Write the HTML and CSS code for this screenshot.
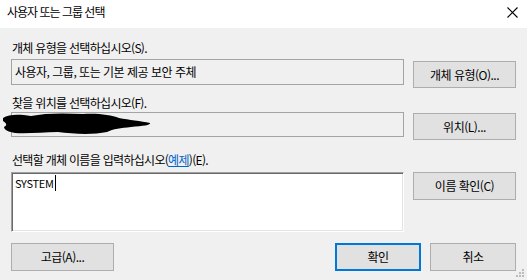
FILE: index.html
```html
<!DOCTYPE html>
<html lang="ko">
<head>
<meta charset="utf-8">
<link rel="stylesheet" href="styles.css">
</head>
<body>
<div class="dialog">
  <div class="titlebar">
    <span class="title">사용자 또는 그룹 선택</span>
    <svg class="close" width="11" height="11" viewBox="0 0 11 11"><path d="M0.5 0.5L10.5 10.5M10.5 0.5L0.5 10.5" stroke="#000" stroke-width="1.1" fill="none"/></svg>
  </div>
  <div class="content">
    <div class="label l1">개체 유형을 선택하십시오(S).</div>
    <div class="row r1">
      <div class="field readonly">사용자, 그룹, 또는 기본 제공 보안 주체</div>
      <div class="btn b1">개체 유형(O)...</div>
    </div>
    <div class="label l2">찾을 위치를 선택하십시오(F).</div>
    <div class="row r2">
      <div class="field readonly loc">
        <svg class="blot" width="150" height="22" viewBox="0 0 150 22"><path d="M0 5 C6 1 16 1 28 3 C42 0 60 0 80 1 C95 0 108 2 116 5 C126 7 138 8 147 10 C148 12 140 13 128 14 C118 15 110 16 104 19 C90 22 70 21 55 19 C40 19 25 21 12 20 C6 19 1 17 1 14 C5 12 3 10 0 8 Z" fill="#000"/></svg>
      </div>
      <div class="btn b2">위치(L)...</div>
    </div>
    <div class="label l3">선택할 개체 이름을 입력하십시오(<span class="link">예제</span>)(E).</div>
    <div class="row r3">
      <div class="edit"><span class="caret">SYSTEM</span></div>
      <div class="btn b3">이름 확인(C)</div>
    </div>
    <div class="bottom">
      <div class="btn adv">고급(A)...</div>
      <div class="right">
        <div class="btn ok">확인</div>
        <div class="btn cancel">취소</div>
      </div>
    </div>
  </div>
  <svg class="grip" width="9" height="9" viewBox="0 0 9 9" fill="#bcbcbc"><rect x="6" y="0" width="2" height="2"/><rect x="3" y="3" width="2" height="2"/><rect x="6" y="3" width="2" height="2"/><rect x="0" y="6" width="2" height="2"/><rect x="3" y="6" width="2" height="2"/><rect x="6" y="6" width="2" height="2"/></svg>
</div>
</body>
</html>
```

FILE: styles.css
```css
html, body {
  margin: 0;
  padding: 0;
}
body {
  width: 527px;
  height: 280px;
  overflow: hidden;
  background: #f0f0f0;
  font-family: "Noto Sans CJK KR", "Noto Sans", sans-serif;
  font-size: 12px;
  letter-spacing: -0.5px;
  color: #000;
}
.dialog {
  position: relative;
  width: 527px;
  height: 280px;
  background: #f0f0f0;
}
.titlebar {
  height: 28px;
  background: #fff;
  display: flex;
  align-items: center;
  justify-content: space-between;
  padding: 0 9px 0 7px;
}
.title {
  line-height: 20px;
  margin-top: -4px;
  letter-spacing: -1px;
}
.close {
  margin-top: -4px;
}
.content {
  padding: 0 11px;
}
.label {
  line-height: 18px;
  padding-left: 1px;
  height: 18px;
  letter-spacing: -0.7px;
}
.l1 { margin-top: 11px; }
.l2 { margin-top: 6px; }
.l3 { margin-top: 11px; }
.row {
  display: flex;
  align-items: flex-start;
  column-gap: 9px;
}
.r1 { margin-top: 2px; }
.r2 { margin-top: 0; }
.r3 { margin-top: 3px; }
.field {
  width: 393px;
  box-sizing: border-box;
  border: 1px solid #a4a4a4;
  padding: 0 3px;
  line-height: 23px;
}
.r1 .field { height: 26px; }
.r2 .field { height: 25px; }
.loc {
  position: relative;
}
.blot {
  position: absolute;
  left: -9px;
  top: 0px;
}
.btn {
  box-sizing: border-box;
  width: 103px;
  height: 28px;
  background: #e1e1e1;
  border: 1px solid #adadad;
  display: flex;
  align-items: center;
  justify-content: center;
  line-height: 18px;
}
.b1 { margin-top: 2px; height: 27px; }
.b2 { margin-top: 1px; height: 27px; }
.link {
  color: #0066cc;
  text-decoration: underline;
}
.edit {
  width: 393px;
  height: 60px;
  box-sizing: border-box;
  background: #fff;
  border-top: 1px solid #a0a0a0;
  border-left: 1px solid #a0a0a0;
  border-right: 1px solid #ffffff;
  border-bottom: 1px solid #ffffff;
  box-shadow: inset 1px 1px 0 #696969, inset -1px -1px 0 #e3e3e3;
  padding: 2px 3px;
  font-size: 11px;
  letter-spacing: -0.3px;
  line-height: 17px;
}
.caret {
  border-right: 1px solid #000;
  padding-right: 1px;
}
.bottom {
  margin-top: 11px;
  display: flex;
  justify-content: space-between;
}
.right {
  display: flex;
  column-gap: 9px;
}
.ok {
  width: 86px;
  border: 2px solid #0078d7;
}
.cancel {
  width: 86px;
}
.grip {
  position: absolute;
  right: 2px;
  bottom: 2px;
}
```
